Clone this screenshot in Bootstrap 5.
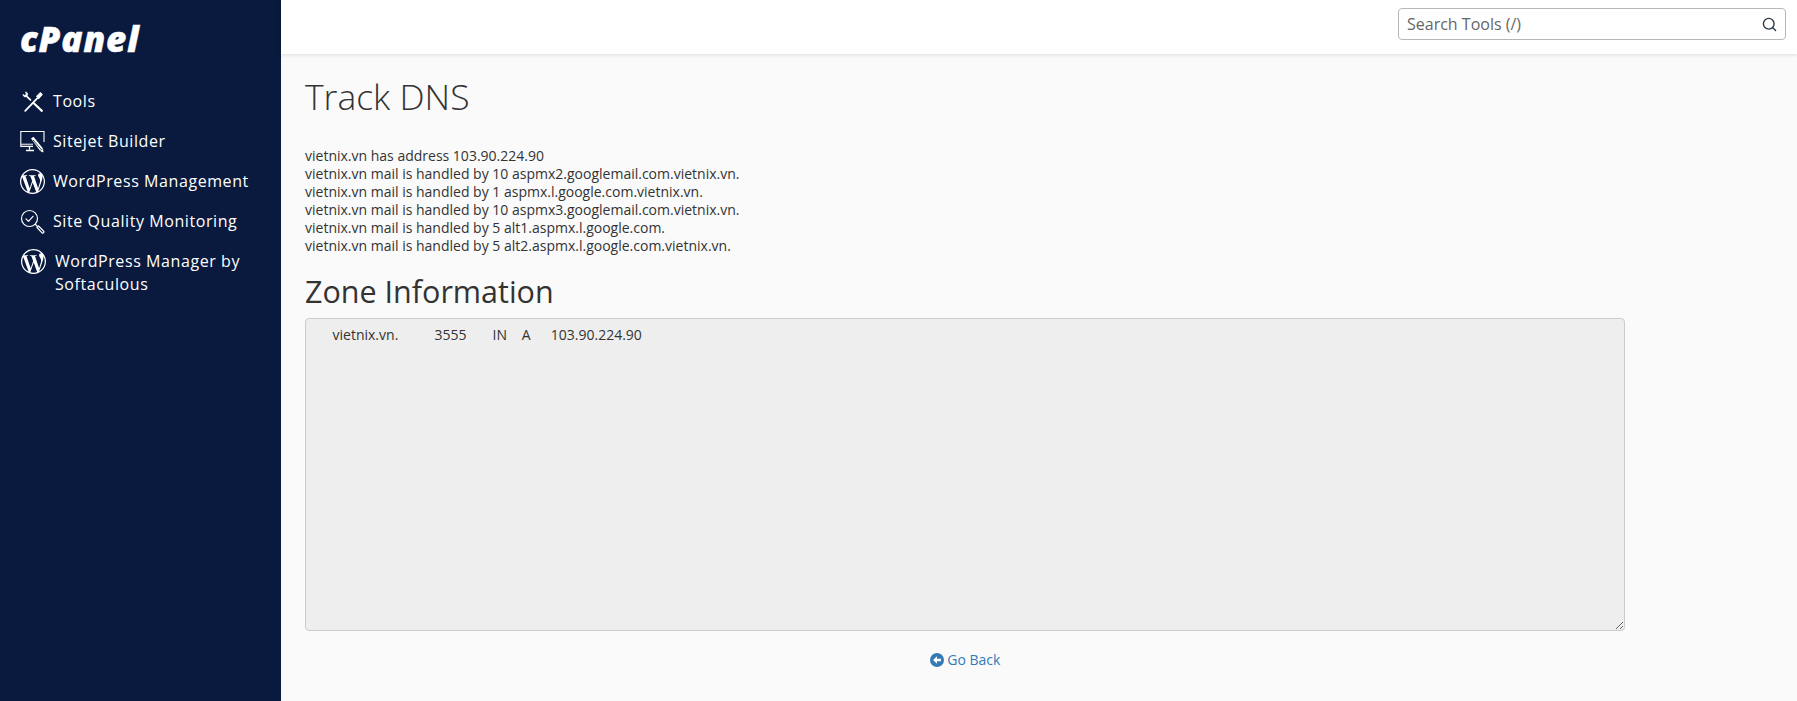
<!DOCTYPE html>
<html lang="en">
<head>
<meta charset="utf-8">
<title>Track DNS</title>
<link href="https://cdn.jsdelivr.net/npm/bootstrap@5.3.0/dist/css/bootstrap.min.css" rel="stylesheet">
<style>
html,body{height:100%;}
body{font-family:"Open Sans",sans-serif;font-size:14px;line-height:18px;color:#333;background:#fafafa;overflow:hidden;}
.side-rail{width:281px;background:#091a3e;color:#fff;}
.brand-mark{height:60px;padding:19px 0 0 20px;font-family:"Open Sans",sans-serif;font-weight:800;font-style:italic;font-size:35px;line-height:40px;letter-spacing:.9px;color:#fff;-webkit-text-stroke:.5px #fff;}
.rail-list{margin-top:21px;}
.rail-link{display:flex;align-items:flex-start;gap:8px;padding:8.5px 20px;font-size:16px;line-height:23px;letter-spacing:.58px;color:#fff;text-decoration:none;font-weight:500;}
.rail-link svg{width:25px;height:25px;flex:none;margin-top:-1px;margin-bottom:-1px;}
.rail-link.rail-wrap{gap:9px;padding-left:21px;}
.top-strip{height:54px;background:#fff;box-shadow:0 1px 4px rgba(0,0,0,.12);padding:8px 11px 0 0;}
.search-box{width:388px;height:32px;border:1px solid #b6b6b6;border-radius:4px;background:#fff;padding:0 8px;font-size:16px;color:#666;}
.page-body{padding:0 0 0 24px;}
.page-wrap{max-width:1320px;}
.page-title{font-size:35.5px;font-weight:300;line-height:44px;margin:20px 0 0;color:#333;}
.dns-lines{margin-top:29px;}
.zone-title{font-size:30.5px;font-weight:500;line-height:36px;margin:18px 0 0;color:#333;}
.zone-box{display:block;width:100%;height:313px;margin-top:9px;padding:7px 12px 6px;font-size:14px;line-height:18px;background:#eee;border:1px solid #ccc;border-radius:4px;color:#333;font-family:"Open Sans",sans-serif;}
.zone-box:focus{background:#eee;box-shadow:none;border-color:#ccc;}
.back-row{margin-top:20px;}
.back-link{color:#337ab7;text-decoration:none;}
.back-link svg{width:14px;height:14px;vertical-align:-2px;}
</style>
</head>
<body>
<div class="d-flex h-100">
  <aside class="side-rail flex-shrink-0">
    <div class="brand-mark">cPanel</div>
    <nav class="rail-list">
      <a class="rail-link" href="#">
        <svg viewBox="0 0 24 24" fill="none" stroke="#fff" stroke-width="1.700" stroke-linecap="round"><path d="M5 21 16.500 9"/><path d="M16 7l3.500-3.500 1.800 1.800L18 9z" fill="#fff" stroke-width="1"/><path d="M10 10.500 6 6.500"/><path d="M7.300 5.300C7.500 4 6.800 3 5.200 3l1 1.800-1.500 1.500L3 5.300c0 1.700 1.200 2.500 2.600 2.200z" fill="#fff" stroke-width=".8"/><path d="M13 13.500l8 7.500" stroke-width="2"/></svg>
        <span>Tools</span>
      </a>
      <a class="rail-link" href="#">
        <svg viewBox="0 0 25 25" fill="none" stroke="#fff" stroke-width="1.100"><path d="M24 13V2.500H.8v15H13"/><path d="M1 15.500h12" stroke-width="1.800" opacity=".7"/><path d="M9.500 18v2.500M6 21.500h8" stroke-width="1.300"/><path d="M11 9.500l2.500-1.800 9.500 11.800-3 2.200z" fill="#fff" stroke="none"/><path d="M20 22l3-2.200.5 3.700z" fill="#fff" stroke="none"/><path d="M13 11l8.500 9.800" stroke="#091a3e" stroke-width=".8"/></svg>
        <span>Sitejet Builder</span>
      </a>
      <a class="rail-link" href="#">
        <svg viewBox="0 0 24 24" fill="#fff"><path d="M21.469 6.825c.84 1.537 1.318 3.3 1.318 5.175 0 3.979-2.156 7.456-5.363 9.325l3.295-9.527c.615-1.54.82-2.771.82-3.864 0-.405-.026-.78-.07-1.11m-7.981.105c.647-.03 1.232-.105 1.232-.105.582-.075.514-.93-.067-.899 0 0-1.755.135-2.88.135-1.064 0-2.85-.15-2.85-.15-.585-.03-.661.855-.075.885 0 0 .54.061 1.125.09l1.68 4.605-2.37 7.08L5.354 6.9c.649-.03 1.234-.1 1.234-.1.585-.075.516-.93-.065-.896 0 0-1.746.138-2.874.138-.2 0-.438-.008-.69-.015C4.911 3.15 8.235 1.215 12 1.215c2.809 0 5.365 1.072 7.286 2.833-.046-.003-.091-.009-.141-.009-1.06 0-1.812.923-1.812 1.914 0 .89.513 1.643 1.06 2.531.411.72.89 1.643.89 2.977 0 .915-.354 1.994-.821 3.479l-1.075 3.585-3.9-11.61.001.014zM12 22.784c-1.059 0-2.081-.153-3.048-.437l3.237-9.406 3.315 9.087c.024.053.05.101.078.149-1.12.393-2.325.609-3.582.609M1.211 12c0-1.564.336-3.05.935-4.39L7.29 21.709C3.694 19.96 1.212 16.271 1.211 12M12 0C5.385 0 0 5.385 0 12s5.385 12 12 12 12-5.385 12-12S18.615 0 12 0"/></svg>
        <span>WordPress Management</span>
      </a>
      <a class="rail-link" href="#">
        <svg viewBox="0 0 25 25" fill="none" stroke="#fff" stroke-width="1.200" stroke-linecap="round" stroke-linejoin="round"><circle cx="9.500" cy="9.500" r="8"/><path d="M6 9.800l2.500 2.500 4.500-5"/><path d="M15.500 15.500l1.500 1.500"/><path d="M17 18.500l1.500-1.500 5 5a1 1 0 0 1-1.500 1.800z"/></svg>
        <span>Site Quality Monitoring</span>
      </a>
      <a class="rail-link rail-wrap" href="#">
        <svg viewBox="0 0 24 24" fill="#fff"><path d="M21.469 6.825c.84 1.537 1.318 3.3 1.318 5.175 0 3.979-2.156 7.456-5.363 9.325l3.295-9.527c.615-1.54.82-2.771.82-3.864 0-.405-.026-.78-.07-1.11m-7.981.105c.647-.03 1.232-.105 1.232-.105.582-.075.514-.93-.067-.899 0 0-1.755.135-2.88.135-1.064 0-2.85-.15-2.85-.15-.585-.03-.661.855-.075.885 0 0 .54.061 1.125.09l1.68 4.605-2.37 7.08L5.354 6.9c.649-.03 1.234-.1 1.234-.1.585-.075.516-.93-.065-.896 0 0-1.746.138-2.874.138-.2 0-.438-.008-.69-.015C4.911 3.15 8.235 1.215 12 1.215c2.809 0 5.365 1.072 7.286 2.833-.046-.003-.091-.009-.141-.009-1.06 0-1.812.923-1.812 1.914 0 .89.513 1.643 1.06 2.531.411.72.89 1.643.89 2.977 0 .915-.354 1.994-.821 3.479l-1.075 3.585-3.9-11.61.001.014zM12 22.784c-1.059 0-2.081-.153-3.048-.437l3.237-9.406 3.315 9.087c.024.053.05.101.078.149-1.12.393-2.325.609-3.582.609M1.211 12c0-1.564.336-3.05.935-4.39L7.29 21.709C3.694 19.96 1.212 16.271 1.211 12M12 0C5.385 0 0 5.385 0 12s5.385 12 12 12 12-5.385 12-12S18.615 0 12 0"/></svg>
        <span>WordPress Manager by Softaculous</span>
      </a>
    </nav>
  </aside>
  <div class="flex-grow-1 d-flex flex-column min-w-0">
    <header class="top-strip d-flex justify-content-end">
      <div class="search-box d-flex align-items-center justify-content-between">
        <span>Search Tools (/)</span>
        <svg width="15" height="15" viewBox="0 0 16 16" fill="none" stroke="#2b3a4a" stroke-width="1.500" stroke-linecap="round"><circle cx="7.200" cy="7.200" r="5.700"/><path d="M11.500 11.500l3 3"/></svg>
      </div>
    </header>
    <main class="page-body">
      <div class="page-wrap">
        <h1 class="page-title">Track DNS</h1>
        <div class="dns-lines">
          vietnix.vn has address 103.90.224.90<br>
          vietnix.vn mail is handled by 10 aspmx2.googlemail.com.vietnix.vn.<br>
          vietnix.vn mail is handled by 1 aspmx.l.google.com.vietnix.vn.<br>
          vietnix.vn mail is handled by 10 aspmx3.googlemail.com.vietnix.vn.<br>
          vietnix.vn mail is handled by 5 alt1.aspmx.l.google.com.<br>
          vietnix.vn mail is handled by 5 alt2.aspmx.l.google.com.vietnix.vn.
        </div>
        <h2 class="zone-title">Zone Information</h2>
        <textarea class="zone-box form-control" readonly>    vietnix.vn.		3555	IN	A	103.90.224.90</textarea>
        <div class="back-row text-center">
          <a class="back-link" href="#"><svg viewBox="0 0 16 16"><circle cx="8" cy="8" r="8" fill="#337ab7"/><path d="M3.500 8 8 3.800v2.700h4.500v3H8v2.700z" fill="#fff"/></svg> Go Back</a>
        </div>
      </div>
    </main>
  </div>
</div>
<script src="https://cdn.jsdelivr.net/npm/bootstrap@5.3.0/dist/js/bootstrap.bundle.min.js"></script>
</body>
</html>
